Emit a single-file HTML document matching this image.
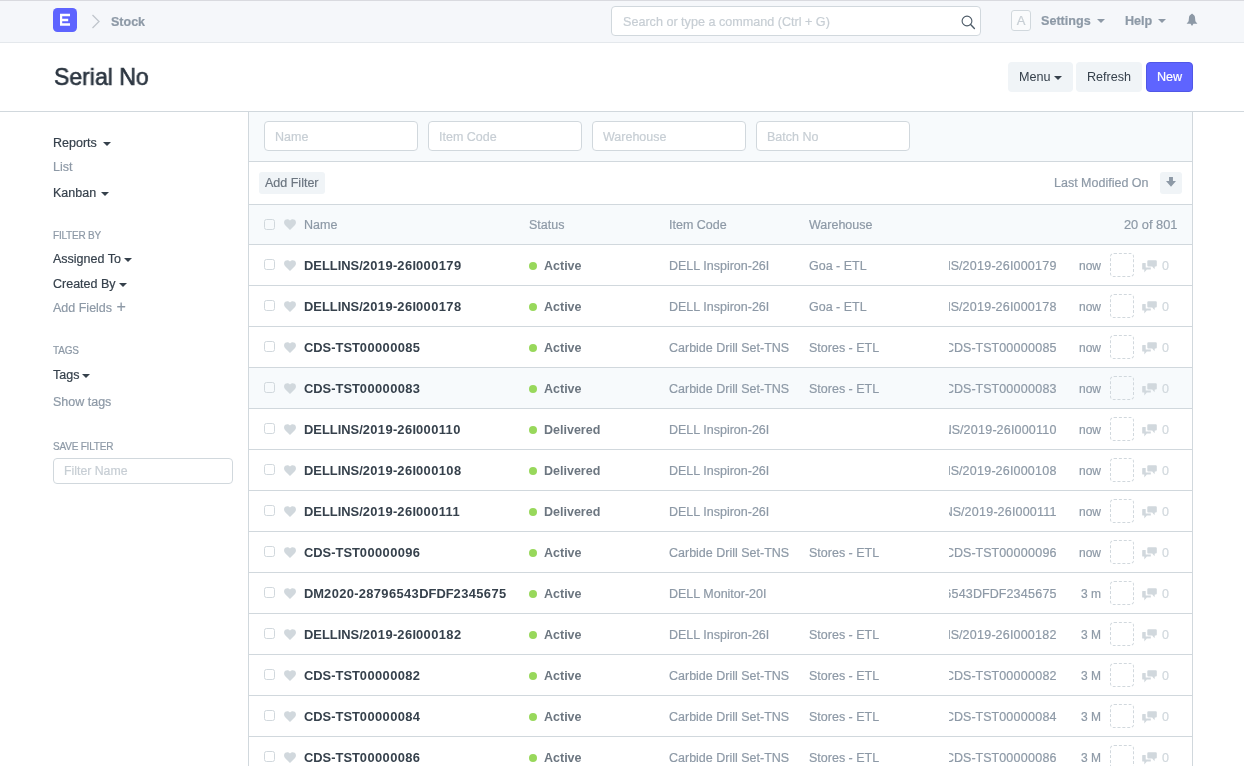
<!DOCTYPE html>
<html><head><meta charset="utf-8">
<style>
*{box-sizing:border-box}
html,body{margin:0;padding:0;background:#fff;width:1244px;height:766px;overflow:hidden;position:relative;font-family:"Liberation Sans",sans-serif;color:#36414c}
body div,body span{-webkit-text-stroke:0.2px currentColor}
b,b span{-webkit-text-stroke:0 !important}
.a{position:absolute;white-space:nowrap}
i,b{font-style:normal}
#topline{left:0;top:0;width:1244px;height:1px;background:#d9dadf}
#nav{left:0;top:1px;width:1244px;height:42px;background:#f5f7fa;border-bottom:1px solid #e4e8ec}
#logo{left:53px;top:8px;width:24px;height:24px;background:#5e64ff;border-radius:5px;color:#fff;font-weight:bold;font-size:16px;text-align:center;line-height:24px}
#crumb{left:111px;top:14px;font-size:12.5px;font-weight:bold;color:#8d99a6;line-height:16px}
#search{left:611px;top:6px;width:370px;height:30px;background:#fff;border:1px solid #d1d8dd;border-radius:4px;font-size:12.6px;color:#c7ced4;padding-left:11px;line-height:30px}
#avatar{left:1011px;top:10px;width:20px;height:21px;border:1px solid #d1d8dd;border-radius:3px;background:#fafbfc;color:#c7ced4;font-size:13px;text-align:center;line-height:19px}
.navtxt{top:13px;font-size:12.6px;font-weight:bold;color:#8d99a6;line-height:16px}
.caret{display:inline-block;width:0;height:0;border-left:4px solid transparent;border-right:4px solid transparent;border-top:4px solid currentColor;vertical-align:middle}
#pagehead{left:0;top:44px;width:1244px;height:68px;border-bottom:1px solid #d1d8dd;background:#fff}
#title{left:54px;top:61px;font-size:24px;transform:scaleX(0.96);transform-origin:0 0;font-weight:normal;-webkit-text-stroke:0.6px #2b3540;color:#2b3540;line-height:32px}
.btn{position:absolute;top:62px;height:30px;border-radius:4px;font-size:12.6px;line-height:30px;text-align:center;white-space:nowrap}
.btn-default{background:#f0f4f7;color:#36414c;-webkit-text-stroke:0 !important}
.btn-primary{background:#5e64ff;color:#fff;border:1px solid #5057e6;line-height:28px}
.side{font-size:12.5px;color:#36414c;line-height:16px}
.muted{color:#8d99a6}
.label{font-size:10px;color:#8d99a6;letter-spacing:-0.2px;line-height:12px}
#sfilter{left:53px;top:458px;width:180px;height:26px;border:1px solid #d1d8dd;border-radius:4px;font-size:12.3px;color:#c7ced4;padding-left:10px;line-height:24px}
#list{left:248px;top:111px;width:945px;height:700px;border:1px solid #d1d8dd;border-bottom:none}
#filters{left:249px;top:112px;width:943px;height:50px;background:#f7fafc;border-bottom:1px solid #d1d8dd}
.finput{position:absolute;top:121px;width:154px;height:30px;background:#fff;border:1px solid #d1d8dd;border-radius:4px;font-size:12.5px;color:#c7ced4;line-height:30px;padding-left:10px;white-space:nowrap}
#fbar{left:249px;top:162px;width:943px;height:43px;border-bottom:1px solid #d1d8dd}
#addfilter{left:259px;top:172px;width:66px;height:22px;background:#f0f4f7;border-radius:3px;font-size:12.5px;color:#6c7680;line-height:22px;padding-left:6px}
#sortlbl{left:1054px;top:175px;font-size:12.5px;color:#8d99a6;line-height:16px}
#sortbtn{left:1160px;top:172px;width:22px;height:22px;background:#f0f4f7;border-radius:3px}
#hdr{left:249px;top:205px;width:943px;height:40px;background:#f7fafc;border-bottom:1px solid #d1d8dd}
.hd{position:absolute;top:217px;font-size:12.5px;color:#8d99a6;line-height:16px;white-space:nowrap}
.row{position:absolute;left:249px;width:943px;height:41px;border-bottom:1px solid #d1d8dd;background:#fff;white-space:nowrap}
.row.hov{background:#f7fafc}
.cb{position:absolute;left:15px;top:14px;width:11px;height:11px;border:1px solid #d1d8dd;border-radius:2.5px;background:transparent}
.heart{position:absolute;left:35px;top:15px;width:12px;height:11px}
.nm{position:absolute;left:55px;top:13px;font-size:12.9px;font-weight:bold;color:#36414c;line-height:16px}
.dg{letter-spacing:0.4px}
.dg2{letter-spacing:0.25px}
.dot{position:absolute;left:280px;top:17px;width:8px;height:8px;border-radius:50%;background:#98d85b}
.st{position:absolute;left:295px;top:13px;font-size:12.5px;font-weight:bold;color:#6c7680;line-height:16px}
.ic{position:absolute;left:420px;top:13px;font-size:12.5px;color:#8d99a6;line-height:16px}
.wh{position:absolute;left:560px;top:13px;font-size:12.5px;color:#8d99a6;line-height:16px}
.idc{position:absolute;left:700px;top:13px;width:108px;overflow:hidden;display:flex;justify-content:flex-end;font-size:12.5px;color:#8d99a6;line-height:16px}
.idc span{flex:none}
.tm{position:absolute;right:91px;top:13px;font-size:12px;color:#8d99a6;line-height:16px}
.dash{position:absolute;left:861px;top:8px;width:24px;height:24px;border:1px dashed #d1d8dd;border-radius:4px}
.cmt{position:absolute;left:893px;top:14.5px;width:15px;height:13px}
.zc{position:absolute;left:913px;top:13px;font-size:12.5px;color:#d1d8dd;line-height:16px}
div,span,b{will-change:transform}
</style></head><body>
<svg width="0" height="0" style="position:absolute">
<defs>
<path id="hrt" fill="#d1d8dd" d="M6 11 L1.2 6.3 C-0.4 4.7 -0.3 2 1.3 0.8 C2.8 -0.3 4.8 0.1 6 1.6 C7.2 0.1 9.2 -0.3 10.7 0.8 C12.3 2 12.4 4.7 10.8 6.3 Z"/>
<g id="cmt" fill="#d1d8dd"><path d="M0.7 3 H3.7 V7.6 H8.8 V9.6 H4.8 L2.3 12.4 V9.6 H0.9 Q0.2 9.6 0.2 8.9 V3.7 Q0.2 3 0.7 3 Z"/><path d="M6.3 0.2 H13.8 Q14.8 0.2 14.8 1.2 V5.4 Q14.8 6.4 13.8 6.4 H12.8 L12.5 9.3 L10.2 6.4 H6.3 Q5.3 6.4 5.3 5.4 V1.2 Q5.3 0.2 6.3 0.2 Z"/></g>
</defs></svg>
<div class="a" id="topline"></div>
<div class="a" id="nav"></div>
<svg class="a" style="left:53px;top:8px" width="24" height="24" viewBox="0 0 24 24"><rect width="24" height="24" rx="4.5" fill="#5e64ff"/><path fill="#fff" d="M7 5.8 H17 V8.3 H9.2 V10.7 H15.2 V13.2 H9.2 V15.3 H17 V17.8 H7 Z"/></svg>
<svg class="a" style="left:91px;top:14px" width="10" height="15" viewBox="0 0 10 15"><path d="M1.5 1 L8 7.5 L1.5 14" fill="none" stroke="#c0c6cc" stroke-width="1.3"/></svg>
<div class="a" id="crumb">Stock</div>
<div class="a" id="search">Search or type a command (Ctrl + G)</div>
<svg class="a" style="left:961px;top:14.5px" width="15" height="15" viewBox="0 0 15 15"><circle cx="6" cy="6" r="4.9" fill="none" stroke="#4c5a67" stroke-width="1.1"/><path d="M9.6 9.6 L13.4 13.4" stroke="#4c5a67" stroke-width="1.4" stroke-linecap="round"/></svg>
<div class="a" id="avatar">A</div>
<div class="a navtxt" style="left:1041px">Settings<span class="caret" style="margin-left:6px;margin-top:-2px"></span></div>
<div class="a navtxt" style="left:1125px">Help<span class="caret" style="margin-left:6px;margin-top:-2px"></span></div>
<svg class="a" style="left:1186px;top:13px" width="12" height="14" viewBox="0 0 12 14"><path fill="#8d99a6" d="M6 0.8 C6.6 0.8 7 1.2 7 1.6 C8.3 2 8.9 3.2 9 4.6 L9.4 8.2 L11.4 10.7 H0.6 L2.6 8.2 L3 4.6 C3.1 3.2 3.7 2 5 1.6 C5 1.2 5.4 0.8 6 0.8 Z M4.5 10.7 H7.5 L6 13 Z"/></svg>

<div class="a" id="pagehead"></div>
<div class="a" id="title">Serial No</div>
<div class="btn btn-default" style="left:1008px;width:65px">Menu <span class="caret"></span></div>
<div class="btn btn-default" style="left:1076px;width:66px">Refresh</div>
<div class="btn btn-primary" style="left:1146px;width:47px">New</div>

<div class="a side" style="left:53px;top:135px">Reports <span class="caret" style="margin-left:3px"></span></div>
<div class="a side muted" style="left:53px;top:159px">List</div>
<div class="a side" style="left:53px;top:185px">Kanban <span class="caret" style="margin-left:1px"></span></div>
<div class="a label" style="left:53px;top:230px">FILTER BY</div>
<div class="a side" style="left:53px;top:251px">Assigned To<span class="caret" style="margin-left:3px"></span></div>
<div class="a side" style="left:53px;top:276px">Created By<span class="caret" style="margin-left:3px"></span></div>
<div class="a side muted" style="left:53px;top:299px">Add Fields <span style="font-size:16px;line-height:16px;margin-left:1px">+</span></div>
<div class="a label" style="left:53px;top:345px">TAGS</div>
<div class="a side" style="left:53px;top:367px">Tags<span class="caret" style="margin-left:3px"></span></div>
<div class="a side muted" style="left:53px;top:394px">Show tags</div>
<div class="a label" style="left:53px;top:441px">SAVE FILTER</div>
<div class="a" id="sfilter">Filter Name</div>

<div class="a" id="list"></div>
<div class="a" id="filters"></div>
<div class="finput" style="left:264px">Name</div>
<div class="finput" style="left:428px">Item Code</div>
<div class="finput" style="left:592px">Warehouse</div>
<div class="finput" style="left:756px">Batch No</div>
<div class="a" id="fbar"></div>
<div class="a" id="addfilter">Add Filter</div>
<div class="a" id="sortlbl">Last Modified On</div>
<div class="a" id="sortbtn"><svg style="position:absolute;left:6px;top:5px" width="10" height="12" viewBox="0 0 10 12"><path fill="#8d99a6" d="M3.05 0 H6.95 V4 H10 L5 9.8 L0 4 H3.05 Z"/></svg></div>
<div class="a" id="hdr"></div>
<i class="a cb" style="left:264px;top:219px"></i>
<svg class="a heart" style="left:284px;top:219px" viewBox="0 0 12 11"><use href="#hrt"/></svg>
<div class="hd" style="left:304px">Name</div>
<div class="hd" style="left:529px">Status</div>
<div class="hd" style="left:669px">Item Code</div>
<div class="hd" style="left:809px">Warehouse</div>
<div class="hd" style="right:67px;font-size:12.8px">20 of 801</div>
<div class="row" style="top:245px"><i class="cb"></i><svg class="heart" viewBox="0 0 12 11"><use href="#hrt"/></svg><b class="nm">DELLINS/<span class="dg">2019</span>-<span class="dg">26</span>I<span class="dg">000179</span></b><i class="dot"></i><b class="st">Active</b><span class="ic">DELL Inspiron-26I</span><span class="wh">Goa - ETL</span><span class="idc"><span>DELLINS/<span class="dg2">2019</span>-<span class="dg2">26</span>I<span class="dg2">000179</span></span></span><span class="tm">now</span><i class="dash"></i><svg class="cmt" viewBox="0 0 15 13"><use href="#cmt"/></svg><span class="zc">0</span></div>
<div class="row" style="top:286px"><i class="cb"></i><svg class="heart" viewBox="0 0 12 11"><use href="#hrt"/></svg><b class="nm">DELLINS/<span class="dg">2019</span>-<span class="dg">26</span>I<span class="dg">000178</span></b><i class="dot"></i><b class="st">Active</b><span class="ic">DELL Inspiron-26I</span><span class="wh">Goa - ETL</span><span class="idc"><span>DELLINS/<span class="dg2">2019</span>-<span class="dg2">26</span>I<span class="dg2">000178</span></span></span><span class="tm">now</span><i class="dash"></i><svg class="cmt" viewBox="0 0 15 13"><use href="#cmt"/></svg><span class="zc">0</span></div>
<div class="row" style="top:327px"><i class="cb"></i><svg class="heart" viewBox="0 0 12 11"><use href="#hrt"/></svg><b class="nm">CDS-TST<span class="dg">00000085</span></b><i class="dot"></i><b class="st">Active</b><span class="ic">Carbide Drill Set-TNS</span><span class="wh">Stores - ETL</span><span class="idc"><span>CDS-TST<span class="dg2">00000085</span></span></span><span class="tm">now</span><i class="dash"></i><svg class="cmt" viewBox="0 0 15 13"><use href="#cmt"/></svg><span class="zc">0</span></div>
<div class="row hov" style="top:368px"><i class="cb"></i><svg class="heart" viewBox="0 0 12 11"><use href="#hrt"/></svg><b class="nm">CDS-TST<span class="dg">00000083</span></b><i class="dot"></i><b class="st">Active</b><span class="ic">Carbide Drill Set-TNS</span><span class="wh">Stores - ETL</span><span class="idc"><span>CDS-TST<span class="dg2">00000083</span></span></span><span class="tm">now</span><i class="dash"></i><svg class="cmt" viewBox="0 0 15 13"><use href="#cmt"/></svg><span class="zc">0</span></div>
<div class="row" style="top:409px"><i class="cb"></i><svg class="heart" viewBox="0 0 12 11"><use href="#hrt"/></svg><b class="nm">DELLINS/<span class="dg">2019</span>-<span class="dg">26</span>I<span class="dg">000110</span></b><i class="dot"></i><b class="st">Delivered</b><span class="ic">DELL Inspiron-26I</span><span class="wh"></span><span class="idc"><span>DELLINS/<span class="dg2">2019</span>-<span class="dg2">26</span>I<span class="dg2">000110</span></span></span><span class="tm">now</span><i class="dash"></i><svg class="cmt" viewBox="0 0 15 13"><use href="#cmt"/></svg><span class="zc">0</span></div>
<div class="row" style="top:450px"><i class="cb"></i><svg class="heart" viewBox="0 0 12 11"><use href="#hrt"/></svg><b class="nm">DELLINS/<span class="dg">2019</span>-<span class="dg">26</span>I<span class="dg">000108</span></b><i class="dot"></i><b class="st">Delivered</b><span class="ic">DELL Inspiron-26I</span><span class="wh"></span><span class="idc"><span>DELLINS/<span class="dg2">2019</span>-<span class="dg2">26</span>I<span class="dg2">000108</span></span></span><span class="tm">now</span><i class="dash"></i><svg class="cmt" viewBox="0 0 15 13"><use href="#cmt"/></svg><span class="zc">0</span></div>
<div class="row" style="top:491px"><i class="cb"></i><svg class="heart" viewBox="0 0 12 11"><use href="#hrt"/></svg><b class="nm">DELLINS/<span class="dg">2019</span>-<span class="dg">26</span>I<span class="dg">000111</span></b><i class="dot"></i><b class="st">Delivered</b><span class="ic">DELL Inspiron-26I</span><span class="wh"></span><span class="idc"><span>DELLINS/<span class="dg2">2019</span>-<span class="dg2">26</span>I<span class="dg2">000111</span></span></span><span class="tm">now</span><i class="dash"></i><svg class="cmt" viewBox="0 0 15 13"><use href="#cmt"/></svg><span class="zc">0</span></div>
<div class="row" style="top:532px"><i class="cb"></i><svg class="heart" viewBox="0 0 12 11"><use href="#hrt"/></svg><b class="nm">CDS-TST<span class="dg">00000096</span></b><i class="dot"></i><b class="st">Active</b><span class="ic">Carbide Drill Set-TNS</span><span class="wh">Stores - ETL</span><span class="idc"><span>CDS-TST<span class="dg2">00000096</span></span></span><span class="tm">now</span><i class="dash"></i><svg class="cmt" viewBox="0 0 15 13"><use href="#cmt"/></svg><span class="zc">0</span></div>
<div class="row" style="top:573px"><i class="cb"></i><svg class="heart" viewBox="0 0 12 11"><use href="#hrt"/></svg><b class="nm">DM<span class="dg">2020</span>-<span class="dg">28796543</span>DFDF<span class="dg">2345675</span></b><i class="dot"></i><b class="st">Active</b><span class="ic">DELL Monitor-20I</span><span class="wh"></span><span class="idc"><span>DM<span class="dg2">2020</span>-<span class="dg2">28796543</span>DFDF<span class="dg2">2345675</span></span></span><span class="tm">3 m</span><i class="dash"></i><svg class="cmt" viewBox="0 0 15 13"><use href="#cmt"/></svg><span class="zc">0</span></div>
<div class="row" style="top:614px"><i class="cb"></i><svg class="heart" viewBox="0 0 12 11"><use href="#hrt"/></svg><b class="nm">DELLINS/<span class="dg">2019</span>-<span class="dg">26</span>I<span class="dg">000182</span></b><i class="dot"></i><b class="st">Active</b><span class="ic">DELL Inspiron-26I</span><span class="wh">Stores - ETL</span><span class="idc"><span>DELLINS/<span class="dg2">2019</span>-<span class="dg2">26</span>I<span class="dg2">000182</span></span></span><span class="tm">3 M</span><i class="dash"></i><svg class="cmt" viewBox="0 0 15 13"><use href="#cmt"/></svg><span class="zc">0</span></div>
<div class="row" style="top:655px"><i class="cb"></i><svg class="heart" viewBox="0 0 12 11"><use href="#hrt"/></svg><b class="nm">CDS-TST<span class="dg">00000082</span></b><i class="dot"></i><b class="st">Active</b><span class="ic">Carbide Drill Set-TNS</span><span class="wh">Stores - ETL</span><span class="idc"><span>CDS-TST<span class="dg2">00000082</span></span></span><span class="tm">3 M</span><i class="dash"></i><svg class="cmt" viewBox="0 0 15 13"><use href="#cmt"/></svg><span class="zc">0</span></div>
<div class="row" style="top:696px"><i class="cb"></i><svg class="heart" viewBox="0 0 12 11"><use href="#hrt"/></svg><b class="nm">CDS-TST<span class="dg">00000084</span></b><i class="dot"></i><b class="st">Active</b><span class="ic">Carbide Drill Set-TNS</span><span class="wh">Stores - ETL</span><span class="idc"><span>CDS-TST<span class="dg2">00000084</span></span></span><span class="tm">3 M</span><i class="dash"></i><svg class="cmt" viewBox="0 0 15 13"><use href="#cmt"/></svg><span class="zc">0</span></div>
<div class="row" style="top:737px"><i class="cb"></i><svg class="heart" viewBox="0 0 12 11"><use href="#hrt"/></svg><b class="nm">CDS-TST<span class="dg">00000086</span></b><i class="dot"></i><b class="st">Active</b><span class="ic">Carbide Drill Set-TNS</span><span class="wh">Stores - ETL</span><span class="idc"><span>CDS-TST<span class="dg2">00000086</span></span></span><span class="tm">3 M</span><i class="dash"></i><svg class="cmt" viewBox="0 0 15 13"><use href="#cmt"/></svg><span class="zc">0</span></div>
</body></html>
